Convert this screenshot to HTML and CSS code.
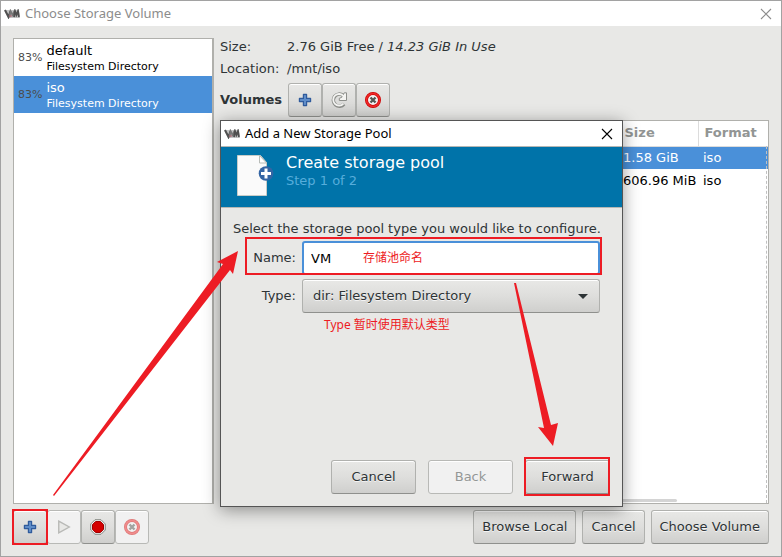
FILE: index.html
```html
<!DOCTYPE html>
<html lang="en">
<head>
<meta charset="utf-8">
<title>Choose Storage Volume</title>
<link rel="stylesheet" href="styles.css">
</head>
<body>
<svg class="defs" aria-hidden="true">
  <symbol id="logo" viewBox="0 0 16 10">
    <path d="M0 1h15l1 8H4z" fill="#c4c4c4"/>
    <path d="M1 1l3.500 7 2-6" fill="none" stroke="#505050" stroke-width="2"/>
    <path d="M5.500 8l1-6 2 4 2-4v6" fill="none" stroke="#777" stroke-width="1.700"/>
    <path d="M10 8l1-6 1.500 4 1.500-4 1 6" fill="none" stroke="#505050" stroke-width="1.800"/>
    <path d="M5 6h3v2H5z" fill="#a56" opacity=".5"/>
  </symbol>
  <symbol id="plus" viewBox="0 0 14 14">
    <path d="M5.500 1.500h3v4h4v3h-4v4h-3v-4h-4v-3h4z" fill="#7ea6d8" stroke="#2f5b9c" stroke-width="1.400" stroke-linejoin="round"/>
    <path d="M7 3v8M3 7h8" stroke="#5b8bc8" stroke-width="1.500"/>
  </symbol>
  <symbol id="close" viewBox="0 0 12 12">
    <path d="M1 1l10 10M11 1L1 11" fill="none" stroke="currentColor" stroke-width="1.100"/>
  </symbol>
  <symbol id="delete" viewBox="0 0 16 16">
    <circle cx="8" cy="8" r="6.500" fill="#f3f3f3" stroke="#c00" stroke-width="3"/>
    <circle cx="8" cy="8" r="6.500" fill="none" stroke="#ef2929" stroke-width="1.600"/>
    <path d="M5.500 5.500l5 5M10.500 5.500l-5 5" stroke="#555753" stroke-width="2.400"/>
  </symbol>
  <symbol id="refresh" viewBox="0 0 16 16">
    <path d="M13 12A6 6 0 1 1 12 3.300" fill="none" stroke="#8c8e8a" stroke-width="3.600"/>
    <path d="M15.500.8v7.700H8.300V6.300l2.500-1L13.300.8z" fill="#f4f4f2" stroke="#8c8e8a" stroke-linejoin="round"/>
    <path d="M12.400 11.600A5.800 5.800 0 1 1 12.600 4.200" fill="none" stroke="#f4f4f2" stroke-width="1.800"/>
  </symbol>
  <symbol id="play" viewBox="0 0 12 12">
    <path d="M1.500 1l9 5-9 5z" fill="#e8e8e6" stroke="#b8b9b6" stroke-width="1.200"/>
  </symbol>
  <symbol id="stop" viewBox="0 0 16 16">
    <path d="M5 .7h6L15.300 5v6L11 15.300H5L.7 11V5z" fill="#eee" stroke="#888a85"/>
    <path d="M5.600 2.500h4.800l3.100 3.100v4.800l-3.100 3.100H5.600l-3.100-3.100V5.600z" fill="#d40000" stroke="#a00000"/>
  </symbol>
</svg>

<div class="window">
  <header class="titlebar inactive">
    <svg class="logo"><use href="#logo"/></svg>
    <h1 class="title">Choose Storage Volume</h1>
    <button class="close" aria-label="Close window"><svg><use href="#close"/></svg></button>
  </header>

  <main class="browser">
    <ul class="pools">
      <li class="pool"><span class="usage">83%</span><span class="pool-name">default<small>Filesystem Directory</small></span></li>
      <li class="pool selected"><span class="usage">83%</span><span class="pool-name">iso<small>Filesystem Directory</small></span></li>
    </ul>
    <section class="details">
      <dl class="facts">
        <dt>Size:</dt><dd>2.76 GiB Free / <em>14.23 GiB In Use</em></dd>
        <dt>Location:</dt><dd>/mnt/iso</dd>
      </dl>
      <div class="volume-tools">
        <h2>Volumes</h2>
        <div class="tools">
          <button class="btn tool" aria-label="New volume"><svg class="small"><use href="#plus"/></svg></button>
          <button class="btn tool" aria-label="Refresh"><svg><use href="#refresh"/></svg></button>
          <button class="btn tool" aria-label="Delete volume"><svg><use href="#delete"/></svg></button>
        </div>
      </div>
      <div class="volumes">
        <table>
          <thead><tr><th class="vol"></th><th class="size">Size</th><th>Format</th></tr></thead>
          <tbody>
            <tr class="selected"><td></td><td>1.58 GiB</td><td>iso</td></tr>
            <tr><td></td><td>606.96 MiB</td><td>iso</td></tr>
          </tbody>
        </table>
        <div class="scroll"></div>
      </div>
    </section>
  </main>

  <footer class="actions">
    <div class="tools">
      <span class="marked"><button class="btn tool" aria-label="Add pool"><svg class="small"><use href="#plus"/></svg></button></span>
      <button class="btn tool" disabled aria-label="Start pool"><svg class="small"><use href="#play"/></svg></button>
      <button class="btn tool" aria-label="Stop pool"><svg><use href="#stop"/></svg></button>
      <button class="btn tool" disabled aria-label="Delete pool"><svg class="faded"><use href="#delete"/></svg></button>
    </div>
    <div class="choices">
      <button class="btn">Browse Local</button>
      <button class="btn">Cancel</button>
      <button class="btn">Choose Volume</button>
    </div>
  </footer>

  <div class="dialog" role="dialog" aria-labelledby="dialog-title">
    <header class="titlebar">
      <svg class="logo"><use href="#logo"/></svg>
      <h2 class="title" id="dialog-title">Add a New Storage Pool</h2>
      <button class="close" aria-label="Close dialog"><svg><use href="#close"/></svg></button>
    </header>
    <div class="banner">
      <svg class="page" viewBox="0 0 40 44" aria-hidden="true">
        <path d="M2.500 2.500h23l6 7v33h-29z" fill="#fafafa" stroke="#c8ccc8"/>
        <path d="M24.500 2.500v7.500h7z" fill="#fff" stroke="#b8bcb8"/>
        <circle cx="31" cy="20.500" r="7.300" fill="#3465a4"/>
        <path d="M31 15.500v10M26 20.500h10" stroke="#fff" stroke-width="3"/>
      </svg>
      <div><h3>Create storage pool</h3><p>Step 1 of 2</p></div>
    </div>
    <form class="form" onsubmit="return false">
      <p class="intro">Select the storage pool type you would like to configure.</p>
      <div class="field name-field">
        <label for="name">Name:</label>
        <input id="name" type="text" value="VM">
        <span class="note name-note" lang="zh">存储池命名</span>
      </div>
      <div class="field">
        <label for="type">Type:</label>
        <select id="type"><option>dir: Filesystem Directory</option></select>
        <svg class="caret" viewBox="0 0 10 5"><path d="M0 0h10L5 5z" fill="#2e3436"/></svg>
        <span class="note type-note" lang="zh">Type 暂时使用默认类型</span>
      </div>
      <div class="dialog-buttons">
        <button class="btn">Cancel</button>
        <button class="btn" disabled>Back</button>
        <span class="marked forward"><button class="btn">Forward</button></span>
      </div>
    </form>
  </div>

  <svg class="arrows" viewBox="0 0 782 557" aria-hidden="true">
    <path d="M53 495L223 264 217 262 238 251 233 274 230 270 54 496z"/>
    <path d="M514 283L544 428 538 427 553 446 558 423 551 425 516 283z"/>
  </svg>
</div>
</body>
</html>
```

FILE: styles.css
```css
* { box-sizing: border-box; }

body {
  margin: 0;
  background: #e8e8e6;
  color: #2e3436;
  font: 13px/16px "DejaVu Sans", "Noto Sans CJK SC", sans-serif;
}

h1, h2, h3, p, dl, dd, ul { margin: 0; padding: 0; }
.defs { position: absolute; width: 0; height: 0; }

.window {
  position: relative;
  display: flex;
  flex-direction: column;
  min-height: 100vh;
  border: 1px solid #a2a2a2;
}

.titlebar {
  display: flex;
  align-items: center;
  gap: 5px;
  height: 25px;
  padding: 0 9px 0 3px;
  background: #fff;
  color: #000;
}
.titlebar.inactive { color: #8c8c8c; }
.title { flex: 1; padding-bottom: 2px; font: 13px/16px "Noto Sans", sans-serif; }
.logo { width: 16px; height: 10px; }
.close {
  display: flex;
  padding: 0;
  border: 0;
  background: none;
  color: inherit;
}
.close svg { width: 12px; height: 12px; }

.browser {
  flex: 1;
  display: grid;
  grid-template-columns: 201px 1fr;
  gap: 6px;
  padding: 12px 12px 6px;
}

.pools {
  list-style: none;
  background: #fff;
  border: 1px solid #b0b0ac;
  border-right-width: 2px;
  color: #000;
}
.pool {
  display: flex;
  align-items: center;
  gap: 4px;
  height: 37px;
  padding-left: 4px;
}
.usage { font-size: 11px; color: #4c4c4c; }
.pool-name { padding-top: 1px; }
.pool-name small { display: block; font-size: 11px; line-height: 15px; }
.selected { background: #4a90d9; color: #fff; }

.details { display: flex; flex-direction: column; }
.facts {
  display: grid;
  grid-template-columns: 61px 1fr;
  gap: 6px;
  padding-top: 1px;
}
.volume-tools { display: flex; align-items: center; gap: 6px; margin: 6px 0 3px; }
.volume-tools h2 { font-size: 13px; line-height: 16px; }
.tools, .choices, .dialog-buttons { display: flex; }
.choices { gap: 6px; }

.btn {
  height: 34px;
  padding: 0 8px;
  border: 1px solid #b0b1ae;
  border-bottom-color: #8f908d;
  border-radius: 3px;
  background: linear-gradient(#e8e8e6, #dededc 50%, #cfcfcd);
  box-shadow: inset 0 1px #fff;
  color: #2e3436;
  font: inherit;
  text-shadow: 0 1px #f4f4f4;
}
.btn:disabled {
  background: #f1f1f1;
  border-color: #b8b9b6;
  color: #949796;
}
.tool { display: flex; align-items: center; justify-content: center; width: 34px; padding: 0; }
.tool svg { width: 16px; height: 16px; }
.tool .small { width: 14px; height: 14px; }
.faded { opacity: .5; }

.volumes {
  position: relative;
  flex: 1;
  background: #fff;
  border: 1px solid #b0b0ac;
  color: #000;
}
.volumes::after {
  content: "";
  position: absolute;
  top: 25px;
  right: 1px;
  bottom: 0;
  border-right: 1px dashed #c0c0c0;
}
.volumes table { width: 100%; border-collapse: collapse; table-layout: fixed; }
.volumes th, .volumes td { height: 23px; padding: 0 5px; text-align: left; white-space: nowrap; }
.volumes th {
  height: 25px;
  padding: 0 6px;
  border-right: 1px solid #dcdcdc;
  border-bottom: 1px solid #dcdcdc;
  color: #929594;
}
.volumes th:last-child { width: 70px; border-right: 0; }
.volumes .size { width: 80px; }
.scroll {
  position: absolute;
  left: 0;
  right: 91px;
  bottom: 1px;
  height: 3px;
  border-radius: 2px;
  background: #d4d4d4;
}

.actions { display: flex; justify-content: space-between; padding: 0 12px 12px; }

.marked { position: relative; display: flex; }
.marked::after, .name-field::after {
  content: "";
  position: absolute;
  inset: -1px;
  border: 2px solid #ed1c24;
  pointer-events: none;
}

.dialog {
  position: absolute;
  top: 119px;
  left: 219px;
  width: 403px;
  background: #e8e8e6;
  border: 1px solid #555;
  box-shadow: 0 3px 16px rgba(0, 0, 0, .4);
}
.banner {
  display: flex;
  gap: 11px;
  height: 62px;
  padding: 6px 14px;
  border: 1px solid #b5b7b4;
  border-width: 1px 0;
  background: #0073a9;
  color: #fff;
}
.page { width: 40px; height: 44px; }
.banner h3 { font-size: 16px; line-height: 19px; font-weight: 400; }
.banner p { color: #56addb; line-height: 18px; }

.form { padding: 13px 12px 12px; }
.intro { margin-bottom: 4px; white-space: nowrap; }
.field {
  position: relative;
  display: grid;
  grid-template-columns: 51px 1fr;
  align-items: center;
  gap: 6px;
  margin: 0 10px 4px 12px;
}
.field label { text-align: right; }
.field input, .field select {
  width: 100%;
  height: 34px;
  border-radius: 3px;
  font: inherit;
}
.field input {
  padding: 0 7px;
  border: 2px solid #4a90d9;
  background: #fff;
  color: #000;
  outline: 0;
}
.field select {
  appearance: none;
  padding: 0 10px;
  border: 1px solid #b0b1ae;
  border-bottom-color: #8f908d;
  background: linear-gradient(#e8e8e6, #dededc 50%, #cfcfcd);
  box-shadow: inset 0 1px #fff;
  color: #2e3436;
  text-shadow: 0 1px #f4f4f4;
}
.name-field::after { inset: -4px -2px 0 0; }
.caret { position: absolute; right: 12px; width: 10px; height: 5px; }
.note { position: absolute; color: #ed1c24; font: 12px/16px "Noto Sans", "Noto Sans CJK SC", sans-serif; }
.name-note { left: 118px; }
.type-note { left: 79px; top: 38px; }
.dialog-buttons { justify-content: flex-end; gap: 12px; margin-top: 147px; }
.dialog-buttons .btn { width: 85px; }
.forward::after { inset: -3px 0 -2px -1px; }

.arrows { position: absolute; top: -1px; left: -1px; width: 782px; height: 557px; fill: #ed1c24; pointer-events: none; }
```
